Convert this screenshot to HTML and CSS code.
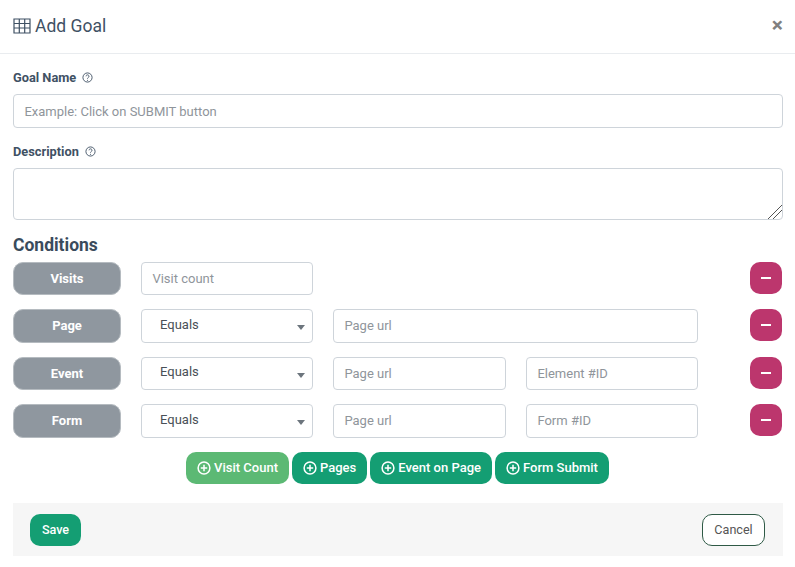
FILE: index.html
```html
<!DOCTYPE html>
<html lang="en">
<head>
<meta charset="utf-8">
<title>Add Goal</title>
<link rel="stylesheet" href="styles.css">
</head>
<body>
<div class="modal">
  <header class="modal-head">
    <h1 class="title">
      <svg class="title-icon" viewBox="0 0 18 16" width="18" height="16" aria-hidden="true"><path d="M1 1h16v14H1zM1 5.5h16M1 10h16M6.3 1v14M11.7 1v14" fill="none" stroke="currentColor" stroke-width="1.2"/></svg>
      Add Goal
    </h1>
    <span class="close">×</span>
  </header>
  <main class="modal-body">
    <label class="field-label">Goal Name
      <svg class="help" viewBox="0 0 12 12" width="11" height="11" aria-hidden="true"><circle cx="6" cy="6" r="5" fill="none" stroke="currentColor"/><path d="M4.4 4.7a1.6 1.6 0 1 1 2.4 1.4c-.6.3-.8.6-.8 1.1" fill="none" stroke="currentColor"/><circle cx="6" cy="9" r=".6" fill="currentColor"/></svg>
    </label>
    <input class="control" placeholder="Example: Click on SUBMIT button">
    <label class="field-label second">Description
      <svg class="help" viewBox="0 0 12 12" width="11" height="11" aria-hidden="true"><circle cx="6" cy="6" r="5" fill="none" stroke="currentColor"/><path d="M4.4 4.7a1.6 1.6 0 1 1 2.4 1.4c-.6.3-.8.6-.8 1.1" fill="none" stroke="currentColor"/><circle cx="6" cy="9" r=".6" fill="currentColor"/></svg>
    </label>
    <textarea class="control area"></textarea>
    <h2 class="section">Conditions</h2>
    <div class="conditions">
      <span class="pill">Visits</span>
      <input class="control" placeholder="Visit count">
      <span class="empty"></span>
      <button class="minus"><span></span></button>

      <span class="pill">Page</span>
      <div class="select"><span class="select-text">Equals</span><i class="caret"></i></div>
      <input class="control wide" placeholder="Page url">
      <button class="minus"><span></span></button>

      <span class="pill">Event</span>
      <div class="select"><span class="select-text">Equals</span><i class="caret"></i></div>
      <input class="control" placeholder="Page url">
      <input class="control" placeholder="Element #ID">
      <button class="minus"><span></span></button>

      <span class="pill">Form</span>
      <div class="select"><span class="select-text">Equals</span><i class="caret"></i></div>
      <input class="control" placeholder="Page url">
      <input class="control" placeholder="Form #ID">
      <button class="minus"><span></span></button>
    </div>
    <div class="adders">
      <button class="add light"><svg class="plus" viewBox="0 0 14 14" width="14" height="14" aria-hidden="true"><circle cx="7" cy="7" r="5.9" fill="none" stroke="currentColor" stroke-width="1.5"/><path d="M7 3.8v6.4M3.8 7h6.4" stroke="currentColor" stroke-width="1.5"/></svg>Visit Count</button>
      <button class="add"><svg class="plus" viewBox="0 0 14 14" width="14" height="14" aria-hidden="true"><circle cx="7" cy="7" r="5.9" fill="none" stroke="currentColor" stroke-width="1.5"/><path d="M7 3.8v6.4M3.8 7h6.4" stroke="currentColor" stroke-width="1.5"/></svg>Pages</button>
      <button class="add"><svg class="plus" viewBox="0 0 14 14" width="14" height="14" aria-hidden="true"><circle cx="7" cy="7" r="5.9" fill="none" stroke="currentColor" stroke-width="1.5"/><path d="M7 3.8v6.4M3.8 7h6.4" stroke="currentColor" stroke-width="1.5"/></svg>Event on Page</button>
      <button class="add"><svg class="plus" viewBox="0 0 14 14" width="14" height="14" aria-hidden="true"><circle cx="7" cy="7" r="5.9" fill="none" stroke="currentColor" stroke-width="1.5"/><path d="M7 3.8v6.4M3.8 7h6.4" stroke="currentColor" stroke-width="1.5"/></svg>Form Submit</button>
    </div>
    <footer class="foot">
      <button class="save">Save</button>
      <button class="cancel">Cancel</button>
    </footer>
  </main>
</div>
</body>
</html>
```
FILE: styles.css
```css
* { box-sizing: border-box; }
html, body { margin: 0; height: 100%; background: #fff; overflow: hidden; }
body { font-family: Roboto, "Liberation Sans", sans-serif; color: #3a4b5c; }
.modal { width: 795px; height: 567px; }
.modal-head {
  height: 54px; border-bottom: 1px solid #e9ecef;
  display: flex; align-items: center; justify-content: space-between;
  padding: 0 12px 2px 13px;
}
.title { margin: 0; font-size: 17.5px; font-weight: 400; color: #3f5164; display: flex; align-items: center; gap: 4px; }
.title-icon { display: block; }
.close { font-size: 21px; font-weight: 700; color: #808080; line-height: 1; }
.modal-body { padding: 15px 12px 0 13px; }
.field-label { display: flex; align-items: center; gap: 6px; height: 17px; font-size: 12.8px; font-weight: 700; color: #3f5164; margin-bottom: 8px; }
.field-label.second { margin-top: 15px; margin-bottom: 8px; }
.help { color: #3f5164; }
.control {
  display: block; width: 100%; height: 34px; padding: 0 10.4px;
  border: 1px solid #ced4da; border-radius: 4px; background: #fff;
  font: 400 13px Roboto, "Liberation Sans", sans-serif; color: #495057; outline: none;
}
.control::placeholder { color: #8f959b; opacity: 1; }
.area { height: 52px; resize: both; padding: 6px 10.4px; }
.area::-webkit-resizer {
  background: linear-gradient(135deg, transparent 50%, #555 50%, #555 56%, transparent 56%, transparent 67%, #555 67%, #555 73%, transparent 73%);
}
.section { margin: 15px 0 6.7px; font-size: 17.5px; line-height: 20px; font-weight: 700; color: #3a4b5c; }
.conditions {
  display: grid;
  grid-template-columns: 108px 172px 173px 172px 64px;
  grid-auto-rows: 33.5px;
  column-gap: 20px; row-gap: 14px;
}
.pill {
  display: flex; align-items: center; justify-content: center;
  background: #8f979f; color: #fff; border-radius: 10px;
  border: 1px solid #b5bbc0;
  font-size: 13px; font-weight: 700;
}
.conditions .control { height: 100%; }
.conditions .wide { grid-column: span 2; }
.empty { grid-column: span 2; }
.select {
  display: flex; align-items: center; justify-content: space-between;
  border: 1px solid #ced4da; border-radius: 4px; background: #fff;
  padding: 0 7px 3px 18px; font-size: 13px; color: #495057;
}
.caret { width: 0; height: 0; margin-top: 7px; border-left: 4px solid transparent; border-right: 4px solid transparent; border-top: 5px solid #6c757d; }
.minus {
  justify-self: end; width: 32px; height: 32px; padding: 0; border: 0; border-radius: 10px;
  background: #bc366d; display: flex; align-items: center; justify-content: center;
}
.minus span { width: 10px; height: 2px; background: #fff; }
.adders { display: flex; justify-content: center; gap: 3px; margin-top: 14.3px; padding-right: 1px; }
button { font-family: Roboto, "Liberation Sans", sans-serif; }
.add {
  display: flex; align-items: center; justify-content: center; gap: 3px;
  height: 32px; padding: 0 11px; border: 0; border-radius: 10px;
  background: #149e73; color: #fff; font-size: 13px; font-weight: 500;
}
.add.light { background: #5cb974; }
.foot {
  display: flex; align-items: center; justify-content: space-between;
  height: 53px; margin-top: 19px; padding: 1px 18px 0 17px; background: #f6f6f6;
}
.save { width: 51px; height: 32px; border: 0; border-radius: 10px; background: #149e73; color: #fff; font-size: 12.6px; font-weight: 500; padding: 0; }
.cancel { width: 63px; height: 32px; border: 1px solid #2f5a46; border-radius: 10px; background: #fff; color: #555; font-size: 12.6px; padding: 0; }
```
